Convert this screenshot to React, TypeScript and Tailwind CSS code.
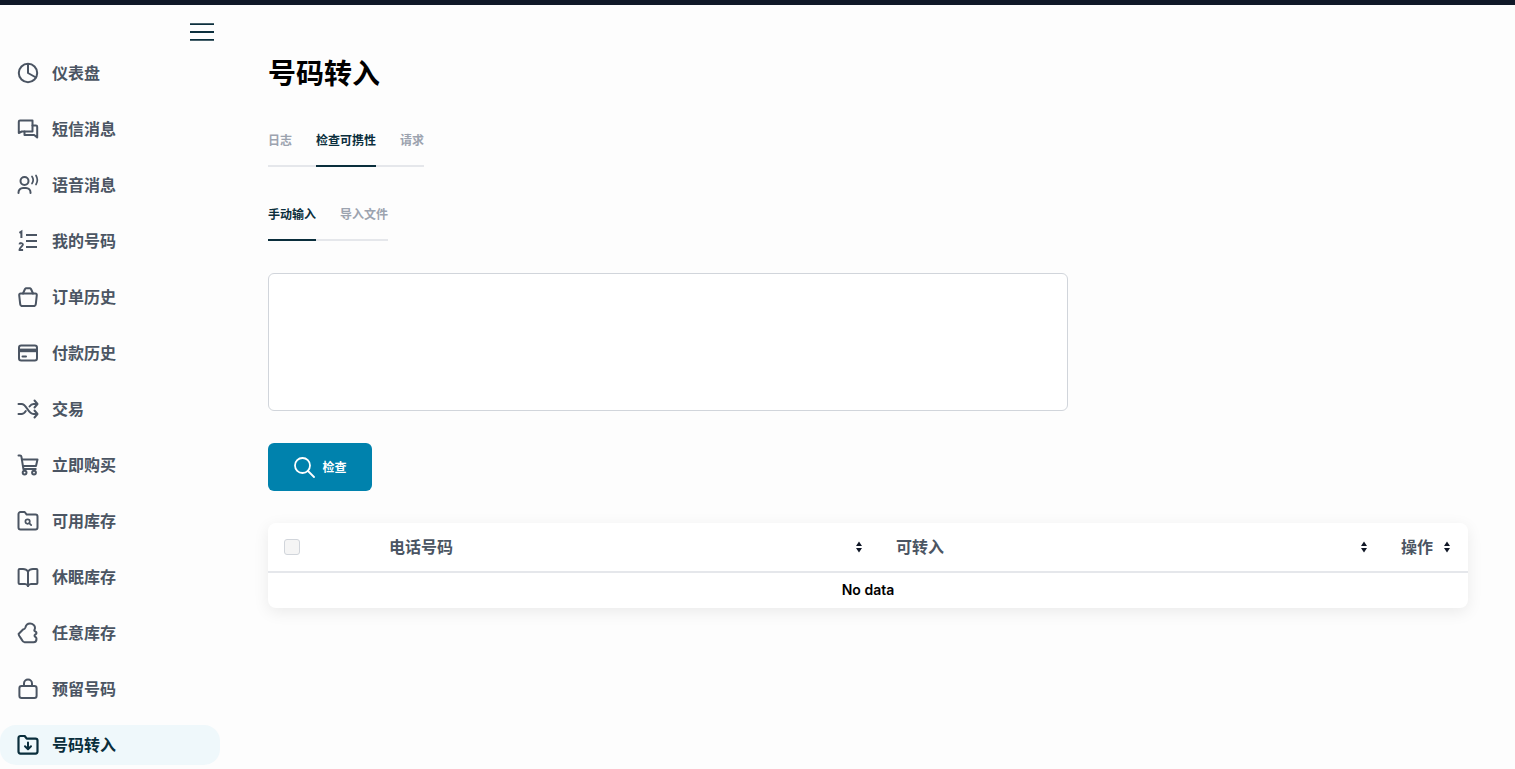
import type { ReactNode } from "react";

const Icon = ({ children }: { children: ReactNode }) => (
  <svg width="24" height="24" viewBox="0 0 24 24" fill="none" stroke="currentColor" strokeWidth="2" strokeLinecap="round" strokeLinejoin="round" className="shrink-0">
    {children}
  </svg>
);

const navItems: { label: string; icon: ReactNode; active?: boolean }[] = [
  {
    label: "仪表盘",
    icon: (
      <>
        <circle cx="12" cy="12" r="9.200" />
        <path d="M12 3v9l8 4.500" />
      </>
    ),
  },
  {
    label: "短信消息",
    icon: (
      <>
        <path d="M16.500 14.500V3.500H4a1.200 1.200 0 0 0-1.200 1.200V16l3-1.500h10.700z" />
        <path d="M16.500 8.500h3.500a1.200 1.200 0 0 1 1.200 1.200V20.500l-3-2.500H8.500v-3.500" />
      </>
    ),
  },
  {
    label: "语音消息",
    icon: (
      <>
        <circle cx="8.500" cy="8" r="4" />
        <path d="M2.500 20v-.5a4.500 4.500 0 0 1 4.500-4.500h3a4.500 4.500 0 0 1 4.500 4.500v.5" />
        <path d="M16 3.500c1.300 1.900 1.300 5.100 0 7" strokeWidth="1.700" />
        <path d="M20 2.500c1.500 2.500 1.500 6.500 0 9" strokeWidth="1.700" />
      </>
    ),
  },
  {
    label: "我的号码",
    icon: (
      <>
        <path d="M10 6h11M10 12h11M10 18h11" strokeWidth="2" strokeLinecap="butt" />
        <path d="M3.400 3.800L5.400 2.600V9" strokeWidth="2" strokeLinecap="butt" strokeLinejoin="miter" />
        <path d="M3.400 15.400c.3-1.800 3.500-1.800 3.500.2 0 1.600-3.400 2.800-3.500 5.400h3.700" strokeWidth="1.900" strokeLinecap="butt" />
      </>
    ),
  },
  {
    label: "订单历史",
    icon: (
      <>
        <path d="M4.600 8.500h14.800a1.400 1.400 0 0 1 1.400 1.600l-1 9a2.400 2.400 0 0 1-2.400 2H6.600a2.400 2.400 0 0 1-2.400-2l-1-9a1.400 1.400 0 0 1 1.400-1.600z" />
        <path d="M7 8.500L9 4a1.500 1.500 0 0 1 1-.7h4a1.500 1.500 0 0 1 1 .7l2 4.500" />
      </>
    ),
  },
  {
    label: "付款历史",
    icon: (
      <>
        <rect x="3" y="4.600" width="18" height="14.800" rx="2.200" />
        <path d="M3 9.400h18" strokeWidth="3.600" strokeLinecap="butt" />
        <path d="M6.500 15.500h3.500" />
      </>
    ),
  },
  {
    label: "交易",
    icon: (
      <>
        <path d="M2.500 7h3c5.500 0 6 10 12 10h3.500" />
        <path d="M2.500 17h3c2 0 3.300-1.400 4.300-3" />
        <path d="M13.500 9.500c1-1.400 2.200-2.500 4-2.500h3.500" />
        <path d="M18.500 3.500L21.500 7l-3 3.500M18.500 13.500l3 3.500-3 3.500" />
      </>
    ),
  },
  {
    label: "立即购买",
    icon: (
      <>
        <path d="M2.500 2.500H4a1.400 1.400 0 0 1 1.400 1.200l2 12.300h12.300" />
        <path d="M6 6.500h15.500l-1.500 6.500H7" />
        <circle cx="8.600" cy="19.600" r="1.900" />
        <circle cx="18" cy="19.600" r="1.900" />
      </>
    ),
  },
  {
    label: "可用库存",
    icon: (
      <>
        <path d="M4.500 3h4.200l2 2.600h8.800A2 2 0 0 1 21.500 7.600v11a2 2 0 0 1-2 2h-15a2 2 0 0 1-2-2V5a2 2 0 0 1 2-2z" strokeWidth="2" />
        <circle cx="11.600" cy="12.600" r="2.200" strokeWidth="1.700" />
        <path d="M13.400 14.400l1.800 1.800" strokeWidth="1.700" />
      </>
    ),
  },
  {
    label: "休眠库存",
    icon: (
      <>
        <path d="M12 6.500C11 5 9.500 4 7 4H3.600a1 1 0 0 0-1 1v13a1 1 0 0 0 1 1H9c1.500 0 2.400.6 3 2 .6-1.400 1.500-2 3-2h5.400a1 1 0 0 0 1-1V5a1 1 0 0 0-1-1H17c-2.500 0-4 1-5 2.500z" />
        <path d="M12 6.500V21" />
      </>
    ),
  },
  {
    label: "任意库存",
    icon: (
      <path d="M2.600 13L7 8.500c1.200-.2 2-.8 2.400-2C10 4 11.500 2.600 14 2.600c3 0 5.200 2 5 4.400-.1 1-.7 1.700-.7 2.500 0 1 2.200 1 2.200 2.500 0 1.300-2 1.500-2 2.700 0 1.200 2 1.300 2 3 0 2-1 3.500-3 3.500H8.500c-1.500 0-2-1-2.700-2.400C5 17 2.600 15 2.600 13z" />
    ),
  },
  {
    label: "预留号码",
    icon: (
      <>
        <rect x="3.400" y="9" width="17.200" height="12" rx="2.200" />
        <path d="M8 9V6.500a4 4 0 0 1 8 0V9" />
      </>
    ),
  },
  {
    label: "号码转入",
    active: true,
    icon: (
      <>
        <path d="M4.500 3h4.200l2 2.600h8.800a2 2 0 0 1 2 2v11a2 2 0 0 1-2 2h-15a2 2 0 0 1-2-2V5a2 2 0 0 1 2-2z" strokeWidth="2.200" />
        <path d="M12 9.500v6.500M9 13.300l3 3 3-3" strokeWidth="2" />
      </>
    ),
  },
];

const SortIcon = () => (
  <svg width="8" height="12" viewBox="0 0 8 12" className="shrink-0 fill-[#111827]">
    <path d="M4 .5l3 4.500H1zM4 11.500L1 7h6z" />
  </svg>
);

const HeaderCell = ({ label }: { label: string }) => (
  <div className="flex items-center justify-between pr-[17px] pl-4">
    <span className="text-base font-semibold text-[#4b5563]">{label}</span>
    <SortIcon />
  </div>
);

export default function App() {
  return (
    <div className="flex h-screen flex-col overflow-hidden bg-[#fdfdfd] font-['Inter','Noto_Sans_CJK_SC',sans-serif]">
      <div className="h-[5px] shrink-0 bg-[#101828]" />
      <div className="flex min-h-0 flex-1">
        <aside className="w-[220px] shrink-0">
          <div className="flex h-[48px] items-start justify-end pt-[18px] pr-[6px]">
            <svg width="24" height="18" viewBox="0 0 24 18" className="stroke-[#0c2f3d]" strokeWidth="1.800">
              <path d="M0 1.200h24M0 9h24M0 16.800h24" />
            </svg>
          </div>
          <nav className="flex flex-col gap-4">
            {navItems.map((item) => (
              <div
                key={item.label}
                className={
                  item.active
                    ? "flex h-10 items-center gap-3 rounded-2xl bg-[#eff8fb] pl-4 text-base font-semibold text-[#0a2e3c]"
                    : "flex h-10 items-center gap-3 rounded-2xl pl-4 text-base font-semibold text-[#4b5563]"
                }
              >
                <Icon>{item.icon}</Icon>
                <span>{item.label}</span>
              </div>
            ))}
          </nav>
        </aside>

        <main className="min-w-0 flex-1 pt-[49px] pr-[47px] pl-12">
          <h1 className="text-[28px] leading-10 font-bold text-black">号码转入</h1>

          <div className="mt-[33px] flex w-fit gap-6 border-b-2 border-[#e5e7eb] text-xs font-semibold">
            <div className="pt-[6px] pb-[16px] leading-4 text-[#9ca3af]">日志</div>
            <div className="-mb-[2px] border-b-2 border-[#0a2e3c] pt-[6px] pb-[16px] leading-4 text-[#0a2e3c]">检查可携性</div>
            <div className="pt-[6px] pb-[16px] leading-4 text-[#9ca3af]">请求</div>
          </div>

          <div className="mt-[34px] flex w-fit gap-6 border-b-2 border-[#e5e7eb] text-xs font-semibold">
            <div className="-mb-[2px] border-b-2 border-[#0a2e3c] pt-[6px] pb-[16px] leading-4 text-[#0a2e3c]">手动输入</div>
            <div className="pt-[6px] pb-[16px] leading-4 text-[#9ca3af]">导入文件</div>
          </div>

          <textarea className="mt-8 block h-[138px] w-[800px] resize-none rounded-md border border-[#d1d5db] bg-white" />

          <button className="mt-8 flex h-12 w-[104px] items-center justify-center gap-[7px] rounded-md bg-[#0082ad] text-xs font-bold text-white">
            <svg width="22" height="22" viewBox="0 0 22 22" fill="none" stroke="currentColor" strokeWidth="1.800" strokeLinecap="round">
              <circle cx="9.500" cy="9.500" r="7.500" />
              <path d="M15 15l6 6" />
            </svg>
            <span className="pt-px">检查</span>
          </button>

          <div className="mt-8 w-[1200px] rounded-lg bg-white shadow-[0_4px_16px_rgba(0,0,0,0.08)]">
            <div className="grid h-[50px] grid-cols-[105px_507px_505px_83px] items-center border-b-2 border-[#e5e7eb]">
              <div className="pl-4">
                <div className="h-4 w-4 rounded-[3px] border border-[#d1d5db] bg-[#f5f5f5]" />
              </div>
              <HeaderCell label="电话号码" />
              <HeaderCell label="可转入" />
              <HeaderCell label="操作" />
            </div>
            <div className="flex h-[35px] items-center justify-center pb-[2px] text-sm font-semibold text-black">No data</div>
          </div>
        </main>
      </div>
    </div>
  );
}
